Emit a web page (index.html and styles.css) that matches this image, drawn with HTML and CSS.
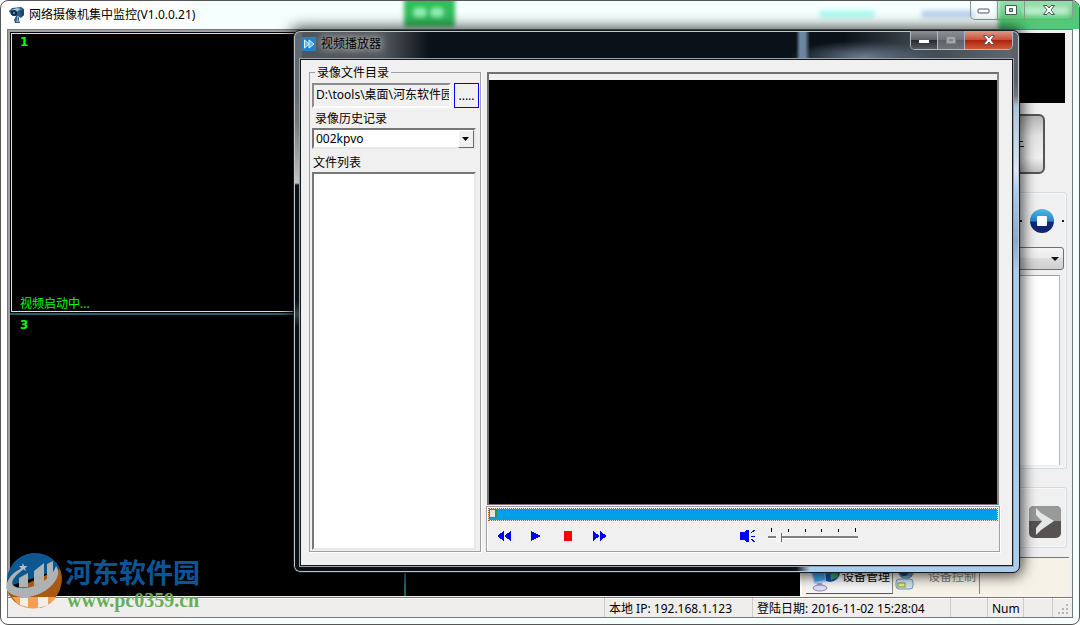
FILE: index.html
```html
<!DOCTYPE html>
<html lang="zh-CN">
<head>
<meta charset="utf-8">
<title>网络摄像机集中监控</title>
<link rel="stylesheet" href="styles.css">
</head>
<body>
<div class="window">
  <header class="titlebar">
    <svg class="glass glass-left" width="150" height="28" aria-hidden="true">
      <defs><filter id="soft"><feGaussianBlur stdDeviation="2"/></filter></defs>
      <g filter="url(#soft)">
        <rect x="8" y="-6" width="51" height="32" fill="#32bd5c"/>
        <rect x="18" y="7" width="12" height="9" rx="3" fill="#8ef0b4"/>
        <rect x="35" y="7" width="12" height="9" rx="3" fill="#8ef0b4"/>
      </g>
    </svg>
    <svg class="glass glass-right" width="264" height="28" aria-hidden="true">
      <g filter="url(#soft)">
        <rect x="4" y="9" width="56" height="8" rx="4" fill="#a4fbee" opacity=".8"/>
        <rect x="106" y="9" width="54" height="8" rx="4" fill="#c0d4f0"/>
        <rect x="183" y="-6" width="90" height="42" fill="#52c878"/>
        <rect x="208" y="6" width="46" height="8" rx="4" fill="#a5e8bb"/>
      </g>
    </svg>
    <svg class="app-icon" width="16" height="16" viewBox="0 0 16 16" aria-hidden="true">
      <path d="M0 4 3 1l9-1 3 2v6l-3 3-2-1v3l1 3H6l-1-3 2-4-4-1-2-2z" fill="#315b83"/>
      <path d="M2 3l6-2 4 1-5 3z" fill="#9cc9e6"/>
      <circle cx="5" cy="6" r="3" fill="#102b48"/>
      <circle cx="5" cy="6" r="1" fill="#6fb7e4"/>
      <path d="M8 9h2l-1 3 1 3H7l1-3z" fill="#6fb0d8"/>
      <path d="M11 4l4-1v5l-3 2z" fill="#17466f"/>
    </svg>
    <h1>网络摄像机集中监控(V1.0.0.21)</h1>
    <div class="caption">
      <button aria-label="最小化"><svg width="14" height="8"><rect x="1" y="3" width="11" height="4" rx="1" fill="#fff" stroke="#4e5866"/></svg></button>
      <button class="green" aria-label="最大化"><svg width="14" height="12"><path d="M1.500 1.500h11v9h-11zM5.500 4.500h3v3h-3z" fill="#fff" fill-rule="evenodd" stroke="#455c56"/></svg></button>
      <button class="close green" aria-label="关闭"><svg width="14" height="12"><path d="M1.500 1.500h3.500l2 2.500 2-2.500h3.500L9 6l3.500 4.500H9L7 8l-2 2.500H1.500L5 6z" fill="#fff" stroke="#455c56"/></svg></button>
    </div>
  </header>
  <div class="client">
    <main class="content">
      <section class="videos">
        <div class="cell selected"><b>1</b><span>视频启动中...</span></div>
        <div class="cell"></div>
        <div class="cell"><b>3</b></div>
        <div class="cell"></div>
      </section>
      <aside class="side">
        <div class="preview"></div>
        <button class="big-button" aria-label="操作"><svg width="6" height="8"><path d="M0 1.500h4M0 6.500h5" stroke="#111" stroke-width="1"/></svg></button>
        <div class="group devices">
          <div class="tools">
            <i class="dot"></i>
            <button aria-label="停止"><svg width="24" height="24" viewBox="0 0 24 24">
              <defs><linearGradient id="ball" x2="0" y2="1"><stop offset="0" stop-color="#49b9e8"/><stop offset=".5" stop-color="#2e83c8"/><stop offset=".55" stop-color="#0d2a7c"/><stop offset="1" stop-color="#14236c"/></linearGradient></defs>
              <circle cx="12" cy="12" r="12" fill="url(#ball)"/><rect x="7" y="7" width="10" height="10" rx="1" fill="#fff"/></svg></button>
            <i class="dot"></i>
          </div>
          <div class="combo combo-gray">
            <select aria-label="设备"></select>
            <svg width="8" height="5"><path d="M0 0h8L4 4z" fill="#111"/></svg>
          </div>
          <div class="tree"></div>
        </div>
        <div class="group next">
          <button aria-label="下一个"><svg width="32" height="32" viewBox="0 0 32 32">
            <rect width="32" height="32" rx="5" fill="#565352"/><path d="M0 15V5q0-5 5-5h22q5 0 5 5v10z" fill="#979a99"/>
            <path d="M7 2l5 5 13 8-13 9-5 5v-7l6-7-6-6z" fill="#e4e7e6"/></svg></button>
        </div>
        <nav class="tabs">
          <button class="tab active">
            <svg width="32" height="30" viewBox="0 0 32 30"><circle cx="22" cy="10" r="10" fill="#1c4cae"/><path d="M16 5l7-3 2 5-5 5-6-2zM22 12l7-3 1 6-7 3z" fill="#3aa86c"/>
              <path d="M2 8l15-2 1 14-12 2z" fill="#bccbe8"/><path d="M4 9l12-1 1 10-10 2z" fill="#3aa8ec"/><path d="M9 21h5l1 4H8z" fill="#9aa0cf"/><ellipse cx="12" cy="26" rx="7" ry="3" fill="#dcdcf4" stroke="#8a8ab8"/></svg>
            设备管理</button>
          <button class="tab" disabled>
            <svg width="20" height="28" viewBox="0 0 20 28"><circle cx="11" cy="8" r="8" fill="#5b87ad"/><circle cx="9" cy="9" r="4" fill="#20456a"/><path d="M8 13h7l-2 5 4 2H5l4-3z" fill="#77a1bf"/>
              <rect x="1" y="16" width="17" height="10" rx="3" fill="#cfe2ee" stroke="#6f9ab4"/><rect x="3" y="20" width="7" height="4" fill="#e4ec80" stroke="#8c9a3a"/></svg>
            设备控制</button>
        </nav>
      </aside>
    </main>
    <footer class="status">
      <span class="fill"></span>
      <span class="ip">本地 IP: 192.168.1.123</span>
      <span class="date">登陆日期: 2016-11-02 15:28:04</span>
      <span class="caps"></span>
      <span class="num">Num</span>
      <span class="scroll"></span>
      <span class="grip"><svg width="12" height="12"><path d="M9 2h2v2H9zM5 6h2v2H5zM9 6h2v2H9zM1 10h2v2H1zM5 10h2v2H5zM9 10h2v2H9z" fill="#b8b4b4"/></svg></span>
    </footer>
  </div>
</div>

<div class="watermark">
  <svg width="56" height="56" viewBox="0 0 56 56" aria-hidden="true">
    <path d="M1 34C-1 12 14 0 29 0c13 0 22 8 25 16z" fill="#0d5791"/>
    <path d="M54 16c3 8 2 14 0 20-3 9-10 16-20 19l-19-2C8 49 4 44 2 39z" fill="#a85a14"/>
    <path d="M6 44h44c-8 13-29 15-39 6z" fill="#f0a050"/>
    <path d="M0 34c2-11 9-17 22-21C9 22 3 29 8 33c12 7 37-4 42-20 8 10-7 28-27 31C8 45 1 40 0 34z" fill="#adb2b5"/>
    <path d="M13 25l9-5v14h-9zM28 18l10-8v20l-10 3zM41 11l6-3v15l-6 4z" fill="#adb2b5"/>
    <path d="M14 45h8v9l-8-2zM32 44h10v8l-10 3z" fill="#f3eee8"/>
    <path d="M17 10l1 3 3 0-2 2 1 3-3-2-3 2 1-3-2-2h3z" fill="#b6bfc5"/>
  </svg>
  <div><strong>河东软件园</strong><em>www.pc0359.cn</em></div>
</div>

<div class="dialog" role="dialog" aria-labelledby="player-title">
  <header class="dialog-bar">
    <svg class="player-icon" width="14" height="14"><rect width="14" height="14" rx="1" fill="#2484c8"/><path d="M2.500 3v8L7 7zM7 3v8l5-4z" fill="#66b7e6" stroke="#d9f2ff"/></svg>
    <h2 id="player-title">视频播放器</h2>
    <div class="caption dark">
      <button aria-label="最小化"><svg width="14" height="8"><rect x="2" y="4" width="10" height="3" fill="#fff"/></svg></button>
      <button disabled aria-label="最大化"><svg width="14" height="12"><path d="M2.500 2.500h9v7h-9zM5.500 5.500h3v1h-3z" fill="#a5a5a5" fill-rule="evenodd" stroke="#858585"/></svg></button>
      <button class="close red" aria-label="关闭"><svg width="14" height="12"><path d="M1.500 1.500h3.500l2 2.500 2-2.500h3.500L9 6l3.500 4.500H9L7 8l-2 2.500H1.500L5 6z" fill="#fff" stroke="#67504e"/></svg></button>
    </div>
  </header>
  <div class="dialog-client">
    <fieldset class="files">
      <legend>录像文件目录</legend>
      <div class="path">
        <input type="text" readonly value="D:\tools\桌面\河东软件园" aria-label="录像文件目录">
        <button>.....</button>
      </div>
      <label class="history-label" for="history">录像历史记录</label>
      <div class="combo">
        <select id="history"><option>002kpvo</option></select>
        <i class="drop"><svg width="8" height="5"><path d="M0 0h7L3.500 4z" fill="#000"/></svg></i>
      </div>
      <p class="list-label">文件列表</p>
      <div class="list"></div>
    </fieldset>
    <section class="player">
      <div class="screen"></div>
      <div class="controls">
        <input class="seek" type="range" value="0" aria-label="进度">
        <div class="buttons">
          <button aria-label="后退"><svg width="14" height="10" shape-rendering="crispEdges"><path d="M7 0v10L0 5zM14 0v10L7 5z" fill="#00f"/></svg></button>
          <button aria-label="播放"><svg width="10" height="10" shape-rendering="crispEdges"><path d="M0 0v10l10-5z" fill="#00f"/></svg></button>
          <button aria-label="停止播放"><svg width="8" height="10"><path d="M0 0h8v10H0z" fill="red"/></svg></button>
          <button aria-label="快进"><svg width="14" height="10" shape-rendering="crispEdges"><path d="M0 0v10l7-5zM7 0v10l7-5z" fill="#00f"/></svg></button>
          <button class="mute" aria-label="静音"><svg width="15" height="12" shape-rendering="crispEdges"><path d="M0 2h4l3-2h2v12H7l-3-2H0z" fill="#00f"/><path d="M11 3l4-3M11 6.500h4M11 9l4 3" stroke="#00f" fill="none"/></svg></button>
          <div class="volume">
            <svg width="90" height="5"><path d="M3.500 0v4M20.500 1v3M37.500 1v3M53.500 1v3M70.500 1v3M87.500 0v4" stroke="#000"/></svg>
            <input type="range" value="10" aria-label="音量">
          </div>
        </div>
      </div>
    </section>
  </div>
</div>
</body>
</html>
```
FILE: styles.css
```css
* { box-sizing: border-box; }
body {
  margin: 0;
  font: 12px/14px "Noto Sans", "Noto Sans CJK SC", sans-serif;
  color: #000;
  overflow: hidden;
}
h1, h2, p { margin: 0; font-size: 12px; font-weight: 400; }
button, input, select { font: inherit; margin: 0; padding: 0; border: 0; border-radius: 0; }
button { display: flex; align-items: center; justify-content: center; background: none; }
svg { display: block; flex: none; }

.window {
  height: 100vh;
  display: flex;
  flex-direction: column;
  padding: 0 6px 6px;
  border: 1px solid #555;
  border-radius: 8px;
  background: linear-gradient(90deg, #fff 0 170px, #f4fffe 200px);
  overflow: hidden;
}
.titlebar {
  position: relative;
  height: 28px;
  display: flex;
  align-items: center;
  gap: 4px;
  padding-left: 2px;
}
.glass { position: absolute; top: 0; }
.glass-left { left: 389px; }
.glass-right { right: -6px; }
.caption {
  position: relative;
  align-self: flex-start;
  margin-left: auto;
  display: flex;
  height: 19px;
  border: 1px solid #8c9894;
  border-top: 0;
  border-radius: 0 0 5px 5px;
  overflow: hidden;
}
.caption button { width: 27px; border-right: 1px solid #8c9894; background: rgba(255, 255, 255, .25); }
.caption .green { background: linear-gradient(rgba(255, 255, 255, .4), rgba(255, 255, 255, .05)); }
.caption .close { width: 47px; border-right: 0; }

.client {
  flex: 1;
  min-height: 0;
  display: flex;
  flex-direction: column;
  border: 1px solid #777;
  background: #f0f0f0;
}
.content { flex: 1; min-height: 0; display: grid; grid-template-columns: 1fr 272px; }
.videos {
  display: grid;
  grid-template: 1fr 1fr / 1fr 1fr;
  gap: 2px;
  background: #1c6469;
  border: solid #a0a0a0;
  border-width: 2px 0 0 2px;
  margin-bottom: 1px;
}
.cell {
  display: flex;
  flex-direction: column;
  justify-content: space-between;
  padding: 3px 10px;
  background: #000;
  color: #0f0;
}
.cell b { font: bold 12px/14px "DejaVu Sans", sans-serif; }
.cell.selected { border: 1px solid #ff0; margin: 1px; padding: 1px 8px 0; box-shadow: 0 0 0 1px #000; }

.side {
  display: flex;
  flex-direction: column;
  border-left: 2px solid #fff;
  padding: 3px 3px 0 4px;
}
.preview { height: 70px; margin-right: 4px; background: #000; }
.big-button {
  height: 60px;
  margin: 11px 24px 0 0;
  padding-right: 18px;
  justify-content: flex-end;
  border: 2px solid #555;
  border-radius: 6px;
  background: linear-gradient(#b5b5b5, #e4e4e4 35%, #f0f0f0 75%, #c2c2c2);
}
.group {
  margin: 18px 2px 0 0;
  border: 1px solid #d0dbe6;
  border-radius: 3px;
  box-shadow: inset 0 0 0 1px #fafafa;
}
.devices { flex: 1; display: flex; flex-direction: column; padding: 0 2px 3px; }
.tools { height: 54px; padding-top: 1px; display: flex; align-items: center; justify-content: flex-end; gap: 8px; }
.dot { width: 2px; height: 2px; background: #222; }
.combo { position: relative; display: flex; }
.combo select { width: 100%; appearance: none; color: #000; }
.combo svg { pointer-events: none; }
.combo-gray select { height: 23px; border: 1px solid #707070; border-radius: 3px; background: linear-gradient(#f4f4f4, #ebebeb 50%, #ddd 50%, #cfcfcf); }
.combo-gray svg { position: absolute; right: 5px; top: 10px; }
.tree { flex: 1; margin: 5px 4px 0 0; background: #fff; border-top: 1px solid #a0a0a0; border-right: 1px solid #b8b8b8; }
.next { height: 61px; display: flex; align-items: center; justify-content: flex-end; padding: 8px 5px 0; }
.tabs {
  height: 40px;
  margin: 9px 0 0 -4px;
  padding: 0 0 3px 4px;
  display: flex;
  border-top: 1px solid #777;
  background: #f6f2e7;
}
.tab { width: 87px; border-right: 1px solid #888; justify-content: flex-start; gap: 2px; padding: 2px 0 0 2px; color: #808080; }
.tab:disabled { gap: 13px; }
.tab.active { background: #f6f6f6; border-bottom: 1px solid #555; color: #000; }

.status {
  height: 20px;
  display: flex;
  border-top: 1px solid #777;
  background: #f0eded;
  box-shadow: inset 0 1px #fff;
}
.status span { padding: 4px 4px 0; border-left: 1px solid #d0cccc; white-space: nowrap; }
.status .fill { flex: 1; border: 0; }
.status .ip { width: 148px; }
.status .date { width: 198px; }
.status .caps { width: 37px; }
.status .num { width: 36px; }
.status .scroll { width: 29px; }
.status .grip { width: 20px; padding: 4px 0 0 4px; }

.watermark { position: absolute; left: 6px; bottom: 14px; display: flex; gap: 3px; }
.watermark strong { display: block; margin-top: 4px; font: bold 27px/30px "Noto Sans CJK SC", sans-serif; color: #0a5598; }
.watermark em { display: block; font: bold 20px/22px "Liberation Serif", serif; color: #67ad59; margin: 2px 0 0 2px; }

.dialog {
  position: absolute;
  left: 293px;
  right: 60px;
  top: 30px;
  bottom: 52px;
  display: flex;
  flex-direction: column;
  padding: 0 6px 6px;
  border: 1px solid #16191d;
  border-radius: 7px;
  background:
    linear-gradient(#646a6f 0 50px, #777 90px, #c2c2c2 152px, #0b1015 154px 270px, #34443c 283px, #0b1015 296px) left / 8px 100% no-repeat,
    linear-gradient(#5c6064 0 50px, #777 65px, #a9c3df 75px, #dce8f4 140px, #a8cdf2 160px, #8ba9cc 210px, #a8cdf2 240px) right / 8px 100% no-repeat,
    linear-gradient(90deg, #0b1015 0 502px, #a8cdf2 516px) bottom / 100% 8px no-repeat,
    radial-gradient(ellipse 75px 16px at 570px 26px, #6b7d90, transparent) top / 100% 30px no-repeat,
    linear-gradient(90deg, #50565b 0, #50565b 90px, #0b1119 135px 502px, #6d86a0 506px 511px, #0b1119 516px 550px, #3b434b 620px, #65696d) top / 100% 30px no-repeat,
    #0b1015;
  box-shadow: inset 0 0 0 1px #bac8d4, 0 0 14px 3px rgba(0, 0, 0, .7);
}
.dialog-bar { height: 28px; display: flex; align-items: center; gap: 5px; padding: 0 0 2px 2px; }
.dialog-bar h2 { text-shadow: 0 0 6px #bbb, 0 0 10px #aaa, 0 0 12px #aaa; }
.caption.dark { border-color: #aeb8c0; }
.dark button { border-color: #aeb8c0; background: linear-gradient(#8c9297, #5d6266 48%, #25292c 50%, #555b60); }
.dark button:disabled { background: linear-gradient(#8c9092, #707476 50%, #5d6163 50%, #707476); }
.dark .red { background: linear-gradient(#dd9a88, #c9513a 48%, #ac1f0c 50%, #cf5a3a); }

.dialog-client {
  flex: 1;
  min-height: 0;
  display: grid;
  grid-template-columns: 172px 1fr;
  gap: 5px;
  padding: 5px 12px 13px 8px;
  border: 1px solid #14181c;
  outline: 1px solid #99a2aa;
  background: #f0f0f0;
}
.files {
  min-width: 0;
  margin: 0;
  padding: 3px 4px 1px 2px;
  display: flex;
  flex-direction: column;
  border: 1px solid #a0a0a0;
  box-shadow: 1px 1px #fff;
}
.files legend { margin-left: 3px; padding: 1px 2px 0; }
.path { display: flex; gap: 3px; height: 25px; margin-right: -3px; }
.path input { flex: 1; min-width: 0; padding: 0 0 2px 2px; background: #f0f0f0; border: 2px solid; border-color: #8c8c8c #fff #fff #8c8c8c; outline: 0; }
.path button { width: 25px; border: 1px solid #00f; color: #003; }
.history-label { margin: 4px 0 2px 3px; }
.files .combo select { height: 21px; padding-left: 2px; border: 2px solid; border-color: #777 #e8e8e8 #e8e8e8 #777; background: #fff; }
.drop {
  position: absolute;
  top: 2px;
  right: 2px;
  bottom: 1px;
  width: 16px;
  display: grid;
  place-items: center;
  border: 1px solid;
  border-color: #fff #696969 #696969 #fff;
  background: #f0f0f0;
  pointer-events: none;
}
.list-label { margin: 7px 0 2px 1px; }
.list { flex: 1; background: #fff; border: 2px solid; border-color: #777 #e8e8e8 #e8e8e8 #777; }

.player { display: flex; flex-direction: column; gap: 1px; margin-top: 7px; min-width: 0; }
.screen { flex: 1; margin: 0 1px; border: 2px solid #707070; border-right-color: #888; border-bottom-width: 1px; background: linear-gradient(#f0f0f0 0 6px, #000 6px); }
.controls { padding: 1px; border: 1px solid #a0a0a0; box-shadow: 1px 1px #fff, inset 1px 1px #fff; }
input[type="range"] { display: block; appearance: none; background: none; }
.seek { width: 100%; height: 13px; border: 1px dotted #b05a2c; }
.seek::-webkit-slider-runnable-track { height: 11px; background: #00a0e9; }
.seek::-webkit-slider-thumb { appearance: none; width: 8px; height: 9px; border: 1px solid #319344; border-right-width: 2px; background: #e4e4e4; }
.buttons { display: flex; align-items: center; height: 29px; }
.buttons button { width: 32px; height: 24px; }
.buttons .mute { margin-left: 115px; }
.volume { width: 90px; margin: 0 0 2px 5px; }
.volume input { width: 90px; height: 9px; }
.volume input::-webkit-slider-runnable-track { height: 9px; background: linear-gradient(transparent 3px, #808080 3px 5px, #fff 5px 6px, transparent 6px); }
.volume input::-webkit-slider-thumb { appearance: none; width: 6px; height: 9px; border-right: 1px solid #696969; background: #f4f4f4; }
```
